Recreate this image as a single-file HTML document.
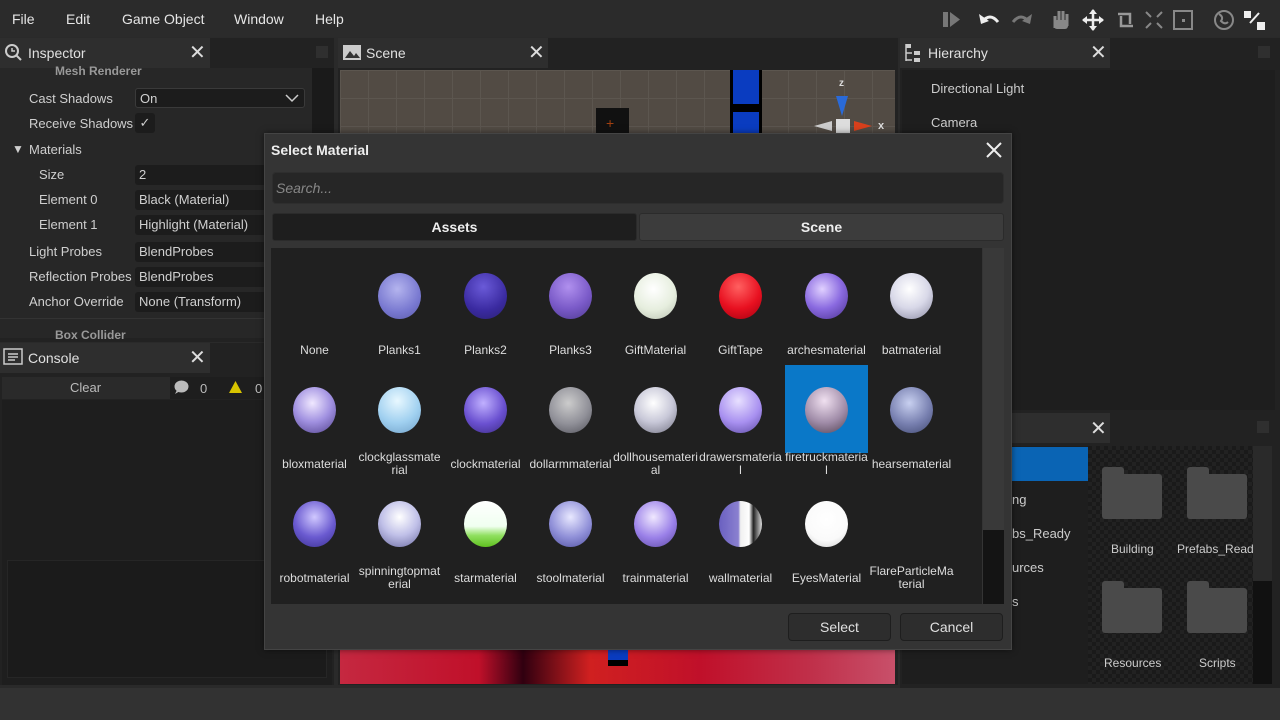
<!DOCTYPE html>
<html><head><meta charset="utf-8"><style>
*{box-sizing:border-box;margin:0;padding:0}
body{width:1280px;height:720px;background:#2a2a2a;font-family:"Liberation Sans",sans-serif;color:#cfcfcf;font-size:13px;position:relative;overflow:hidden}
.a{position:absolute}
.t{position:absolute;white-space:nowrap}
.x{position:absolute;font-size:20px;color:#ddd;line-height:1}
.field{position:absolute;background:#1c1c1c;border-radius:3px;height:20px;color:#d0d0d0;padding-left:4px;line-height:20px;font-size:13px}
.tile{position:absolute;width:85px;height:114px;text-align:center;font-size:12px;color:#ddd}
.tile .s{position:absolute;left:21px;top:9px;width:43px;height:46px;border-radius:50%}
.tile .l{position:absolute;left:0;right:0;top:74px;line-height:13px}
.sel{background:#0a78c8}
.folder{position:absolute;width:60px;height:52px}
.folder:before{content:"";position:absolute;left:0;top:0;width:22px;height:10px;background:#4a4a4a;border-radius:3px 3px 0 0}
.folder:after{content:"";position:absolute;left:0;top:7px;width:60px;height:45px;background:#4a4a4a;border-radius:3px}
</style></head><body>
<!-- menu -->
<div class="a" style="left:0;top:0;width:1280px;height:37px;background:#2b2b2b"></div>
<div class="t" style="left:12px;top:11px;font-size:14px;color:#e6e6e6">File</div>
<div class="t" style="left:66px;top:11px;font-size:14px;color:#e6e6e6">Edit</div>
<div class="t" style="left:122px;top:11px;font-size:14px;color:#e6e6e6">Game Object</div>
<div class="t" style="left:234px;top:11px;font-size:14px;color:#e6e6e6">Window</div>
<div class="t" style="left:315px;top:11px;font-size:14px;color:#e6e6e6">Help</div>
<svg class="a" style="left:940px;top:8px" width="330" height="24" viewBox="940 8 330 24">
<g fill="#777"><rect x="943" y="12" width="5" height="15"/><path d="M950 12 L960 19.5 L950 27Z"/></g>
<path d="M982 22 q8-10 16 0" stroke="#eee" stroke-width="3" fill="none"/><path d="M979 14 l2 10 l8-3z" fill="#eee"/>
<path d="M1013 22 q8-10 16 0" stroke="#777" stroke-width="3" fill="none"/><path d="M1032 14 l-2 10 l-8-3z" fill="#777"/>
<path d="M1055 28 v-12 M1059 26 v-15 M1063 26 v-15 M1067 26 v-12" stroke="#888" stroke-width="3"/><rect x="1054" y="20" width="14" height="9" rx="3" fill="#888"/>
<path d="M1093 10 v20 M1083 20 h20" stroke="#eee" stroke-width="2.5"/><path d="M1093 9 l-4 5h8z M1093 31 l-4-5h8z M1082 20 l5-4v8z M1104 20 l-5-4v8z" fill="#eee"/>
<path d="M1118 14 h12 v10 M1133 26 h-12 v-10" stroke="#999" stroke-width="2.5" fill="none"/>
<path d="M1146 12 l5 5 M1162 12 l-5 5 M1146 28 l5-5 M1162 28 l-5-5" stroke="#888" stroke-width="2"/>
<rect x="1174" y="11" width="18" height="18" stroke="#888" stroke-width="2" fill="none"/><rect x="1182" y="19" width="3" height="3" fill="#888"/>
<circle cx="1224" cy="20" r="9" fill="none" stroke="#888" stroke-width="2"/><path d="M1219 14 q5 3 2 7 q4 4 7 1" stroke="#888" stroke-width="2" fill="none"/>
<rect x="1244" y="11" width="7" height="7" fill="#eee"/><rect x="1257" y="22" width="8" height="8" fill="#eee"/><path d="M1250 23 l9-10" stroke="#eee" stroke-width="2"/>
</svg>

<!-- Inspector -->
<div class="a" style="left:0;top:38px;width:334px;height:304px;background:#222"></div>
<div class="a" style="left:0;top:38px;width:210px;height:30px;background:#2e2e2e"></div>
<div class="a" style="left:0;top:68px;width:312px;height:270px;background:#272727"></div>
<div class="a" style="left:312px;top:68px;width:22px;height:270px;background:#1a1a1a"></div>
<div class="t" style="left:55px;top:64px;color:#999;font-weight:bold;font-size:12px">Mesh Renderer</div>
<div class="t" style="left:55px;top:328px;color:#999;font-weight:bold;font-size:12px">Box Collider</div>
<div class="a" style="left:0;top:318px;width:312px;height:1px;background:#333"></div>
<svg class="a" style="left:4px;top:43px" width="20" height="20"><circle cx="8" cy="8" r="6" stroke="#ccc" stroke-width="2" fill="none"/><path d="M12 12 l5 5" stroke="#ccc" stroke-width="2"/><path d="M8 5 v3 h3" stroke="#ccc" stroke-width="1.5" fill="none"/></svg>
<div class="t" style="left:28px;top:45px;font-size:14px;color:#e0e0e0">Inspector</div>
<div class="x" style="left:189px;top:43px">✕</div>
<div class="a" style="left:316px;top:46px;width:12px;height:12px;background:#2f2f2f"></div>
<div class="t" style="left:29px;top:91px">Cast Shadows</div>
<div class="field" style="left:135px;top:88px;width:170px;border:1px solid #3a3a3a">On</div>
<svg class="a" style="left:285px;top:92px" width="14" height="12"><path d="M1 3 l6 6 l6-6" stroke="#ccc" stroke-width="1.5" fill="none"/></svg>
<div class="t" style="left:29px;top:116px">Receive Shadows</div>
<div class="a" style="left:135px;top:113px;width:20px;height:20px;background:#1c1c1c;border-radius:3px;color:#ccc;text-align:center;line-height:20px">✓</div>
<div class="t" style="left:12px;top:142px;font-size:12px">▼</div>
<div class="t" style="left:29px;top:142px">Materials</div>
<div class="t" style="left:39px;top:167px">Size</div>
<div class="t" style="left:39px;top:192px">Element 0</div>
<div class="t" style="left:39px;top:217px">Element 1</div>
<div class="t" style="left:29px;top:244px">Light Probes</div>
<div class="t" style="left:29px;top:269px">Reflection Probes</div>
<div class="t" style="left:29px;top:294px">Anchor Override</div>
<div class="field" style="left:135px;top:165px;width:140px">2</div>
<div class="field" style="left:135px;top:190px;width:140px">Black (Material)</div>
<div class="field" style="left:135px;top:215px;width:140px">Highlight (Material)</div>
<div class="field" style="left:135px;top:242px;width:140px">BlendProbes</div>
<div class="field" style="left:135px;top:267px;width:140px">BlendProbes</div>
<div class="field" style="left:135px;top:292px;width:140px">None (Transform)</div>

<!-- Console -->
<div class="a" style="left:0;top:343px;width:334px;height:342px;background:#222"></div>
<div class="a" style="left:0;top:343px;width:210px;height:30px;background:#2e2e2e"></div>
<svg class="a" style="left:3px;top:348px" width="22" height="20"><rect x="1" y="1" width="18" height="15" fill="none" stroke="#ccc" stroke-width="1.5"/><path d="M5 6h10M5 9h10M5 12h7" stroke="#ccc" stroke-width="1.5"/></svg>
<div class="t" style="left:28px;top:350px;font-size:14px;color:#e0e0e0">Console</div>
<div class="x" style="left:189px;top:348px">✕</div>
<div class="a" style="left:2px;top:377px;width:168px;height:22px;background:#2a2a2a"></div>
<div class="t" style="left:70px;top:380px;color:#bbb">Clear</div>
<div class="a" style="left:170px;top:377px;width:164px;height:22px;background:#1e1e1e"></div>
<svg class="a" style="left:174px;top:380px" width="16" height="15"><ellipse cx="7.5" cy="6.5" rx="7" ry="6" fill="#bbb"/><path d="M3 10 l-2 4 l5-3z" fill="#bbb"/></svg>
<div class="t" style="left:200px;top:381px;color:#bbb">0</div>
<svg class="a" style="left:228px;top:380px" width="15" height="14"><path d="M7.5 1 L14 13 H1Z" fill="#d8c400"/></svg>
<div class="t" style="left:255px;top:381px;color:#bbb">0</div>
<div class="a" style="left:2px;top:400px;width:330px;height:285px;background:#1e1e1e"></div>
<div class="a" style="left:7px;top:560px;width:320px;height:118px;background:#1b1b1b;border:1px solid #262626"></div>

<!-- Scene -->
<div class="a" style="left:338px;top:38px;width:560px;height:647px;background:#222"></div>
<div class="a" style="left:338px;top:38px;width:210px;height:30px;background:#2e2e2e"></div>
<svg class="a" style="left:342px;top:44px" width="20" height="18"><rect x="1" y="1" width="18" height="15" fill="#ccc"/><path d="M3 14 l5-7 4 5 2-3 4 5z" fill="#333"/></svg>
<div class="t" style="left:366px;top:45px;font-size:14px;color:#e0e0e0">Scene</div>
<div class="x" style="left:528px;top:43px">✕</div>
<div class="a" style="left:340px;top:70px;width:555px;height:580px;background:#524b44;background-image:linear-gradient(#5c564f 1px,transparent 1px),linear-gradient(90deg,#5c564f 1px,transparent 1px);background-size:28px 28px"></div>
<div class="a" style="left:596px;top:108px;width:33px;height:28px;background:#111"></div>
<div class="t" style="left:606px;top:115px;color:#a04010;font-size:14px">+</div>
<div class="a" style="left:730px;top:70px;width:32px;height:68px;background:#000"></div>
<div class="a" style="left:733px;top:70px;width:26px;height:34px;background:#0a3cc0"></div>
<div class="a" style="left:733px;top:112px;width:26px;height:26px;background:#0a3cc0"></div>
<div class="t" style="left:839px;top:78px;font-size:10px;color:#ddd;font-weight:bold">z</div>
<svg class="a" style="left:810px;top:94px" width="80" height="40"><path d="M26 2 L38 2 L32 22Z" fill="#2a6ad8"/><rect x="26" y="25" width="14" height="14" fill="#ddd"/><path d="M4 32 L22 27 L22 37Z" fill="#ccc"/><path d="M62 32 L44 27 L44 37Z" fill="#d8401c"/></svg>
<div class="t" style="left:878px;top:120px;font-size:11px;color:#ddd;font-weight:bold">x</div>
<div class="a" style="left:340px;top:650px;width:555px;height:34px;background:linear-gradient(90deg,#c52840 0%,#c0102a 25%,#300010 33%,#d02020 45%,#c0102a 65%,#c0304a 85%,#c8506a 100%)"></div>
<div class="a" style="left:608px;top:648px;width:20px;height:18px;background:#0a3cc0;border-bottom:6px solid #000"></div>

<!-- Hierarchy -->
<div class="a" style="left:900px;top:38px;width:380px;height:375px;background:#222"></div>
<div class="a" style="left:900px;top:38px;width:210px;height:30px;background:#2e2e2e"></div>
<svg class="a" style="left:904px;top:43px" width="20" height="20"><path d="M2 1v17 M2 10h6 M2 17h6" stroke="#ccc" stroke-width="1.5" fill="none"/><rect x="2" y="1" width="5" height="4" fill="#ccc"/><rect x="10" y="8" width="6" height="4" fill="#ccc"/><rect x="10" y="15" width="6" height="4" fill="#ccc"/></svg>
<div class="t" style="left:928px;top:45px;font-size:14px;color:#e0e0e0">Hierarchy</div>
<div class="x" style="left:1090px;top:43px">✕</div>
<div class="a" style="left:1258px;top:46px;width:12px;height:12px;background:#2f2f2f"></div>
<div class="a" style="left:902px;top:70px;width:373px;height:340px;background:#1e1e1e"></div>
<div class="t" style="left:931px;top:81px;color:#ccc">Directional Light</div>
<div class="t" style="left:931px;top:115px;color:#ccc">Camera</div>

<!-- Project -->
<div class="a" style="left:900px;top:413px;width:380px;height:275px;background:#222"></div>
<div class="a" style="left:900px;top:413px;width:210px;height:30px;background:#2e2e2e"></div>
<div class="x" style="left:1090px;top:419px">✕</div>
<div class="a" style="left:1257px;top:421px;width:12px;height:12px;background:#2f2f2f"></div>
<div class="a" style="left:902px;top:446px;width:186px;height:238px;background:#1e1e1e"></div>
<div class="a" style="left:1012px;top:447px;width:76px;height:34px;background:#0a64b4"></div>
<div class="t" style="left:1012px;top:492px;color:#ccc">ng</div>
<div class="t" style="left:1012px;top:526px;color:#ccc">bs_Ready</div>
<div class="t" style="left:1012px;top:560px;color:#ccc">urces</div>
<div class="t" style="left:1012px;top:594px;color:#ccc">s</div>
<div class="a" style="left:1088px;top:446px;width:165px;height:238px;background:#1c1c1c;background-image:repeating-conic-gradient(#222 0 25%,#1a1a1a 0 50%);background-size:8px 8px"></div>
<div class="a" style="left:1253px;top:446px;width:19px;height:135px;background:#2a2a2a"></div>
<div class="a" style="left:1253px;top:581px;width:19px;height:103px;background:#111"></div>
<div class="folder" style="left:1102px;top:467px"></div>
<div class="folder" style="left:1187px;top:467px"></div>
<div class="folder" style="left:1102px;top:581px"></div>
<div class="folder" style="left:1187px;top:581px"></div>
<div class="t" style="left:1111px;top:542px;font-size:12px;color:#ccc">Building</div>
<div class="t" style="left:1177px;top:542px;font-size:12px;color:#ccc">Prefabs_Read</div>
<div class="t" style="left:1104px;top:656px;font-size:12px;color:#ccc">Resources</div>
<div class="t" style="left:1199px;top:656px;font-size:12px;color:#ccc">Scripts</div>

<!-- bottom bar -->
<div class="a" style="left:0;top:688px;width:1280px;height:32px;background:#323232"></div>

<!-- Dialog -->
<div class="a" style="left:264px;top:133px;width:748px;height:517px;background:#343434;border:1px solid #444;box-shadow:0 0 6px rgba(0,0,0,.5)"></div>
<div class="t" style="left:271px;top:142px;font-size:14px;font-weight:bold;color:#eee">Select Material</div>
<svg class="a" style="left:986px;top:142px" width="16" height="16"><path d="M1 1L15 15M15 1L1 15" stroke="#eee" stroke-width="2"/></svg>
<div class="a" style="left:272px;top:172px;width:732px;height:32px;background:#262626;border:1px solid #2e2e2e;border-radius:4px"></div>
<div class="t" style="left:276px;top:180px;font-style:italic;color:#888;font-size:14px">Search...</div>
<div class="a" style="left:272px;top:213px;width:365px;height:28px;background:#1e1e1e;border:1px solid #2b2b2b;border-radius:3px;text-align:center;line-height:26px;font-weight:bold;color:#eee;font-size:14px">Assets</div>
<div class="a" style="left:639px;top:213px;width:365px;height:28px;background:#3c3c3c;border:1px solid #2b2b2b;border-radius:3px;text-align:center;line-height:26px;font-weight:bold;color:#eee;font-size:14px">Scene</div>
<div class="a" style="left:271px;top:248px;width:711px;height:356px;background:#202020"></div>
<div class="a" style="left:983px;top:248px;width:21px;height:282px;background:#393939"></div>
<div class="a" style="left:983px;top:530px;width:21px;height:74px;background:#141414"></div>

<!-- row 1 -->
<div class="tile" style="left:272px;top:250px"><div class="l" style="top:94px">None</div></div>
<div class="tile" style="left:357px;top:250px"><div class="s" style="top:23px;background:radial-gradient(circle at 45% 35%,#b4b4ee,#7878d0 60%,#5a5aa8)"></div><div class="l" style="top:94px">Planks1</div></div>
<div class="tile" style="left:443px;top:250px"><div class="s" style="top:23px;background:radial-gradient(circle at 45% 30%,#6a5ad8,#3a2aa0 60%,#2a2070)"></div><div class="l" style="top:94px">Planks2</div></div>
<div class="tile" style="left:528px;top:250px"><div class="s" style="top:23px;background:radial-gradient(circle at 45% 30%,#b090ee,#7a5ac8 55%,#4e3a90)"></div><div class="l" style="top:94px">Planks3</div></div>
<div class="tile" style="left:613px;top:250px"><div class="s" style="top:23px;background:radial-gradient(circle at 45% 35%,#fff,#e6eede 55%,#b8c0b0);"></div><div class="l" style="top:94px">GiftMaterial</div></div>
<div class="tile" style="left:698px;top:250px"><div class="s" style="top:23px;background:radial-gradient(circle at 45% 30%,#ff6060,#e81020 55%,#a00010)"></div><div class="l" style="top:94px">GiftTape</div></div>
<div class="tile" style="left:784px;top:250px"><div class="s" style="top:23px;background:radial-gradient(circle at 40% 35%,#e0d0ff,#8a6ae0 50%,#4a3090)"></div><div class="l" style="top:94px">archesmaterial</div></div>
<div class="tile" style="left:869px;top:250px"><div class="s" style="top:23px;background:radial-gradient(circle at 45% 35%,#fff,#d8d8e8 50%,#8888a0)"></div><div class="l" style="top:94px">batmaterial</div></div>
<!-- row 2 -->
<div class="tile" style="left:272px;top:364px"><div class="s" style="top:23px;background:radial-gradient(circle at 45% 35%,#f0e8ff,#a090e0 50%,#50408a)"></div><div class="l" style="top:94px">bloxmaterial</div></div>
<div class="tile" style="left:357px;top:364px"><div class="s" style="top:23px;background:radial-gradient(circle at 45% 30%,#e8f8ff,#a0d0f0 55%,#70a0c8)"></div><div class="l" style="top:87px">clockglassmate<br>rial</div></div>
<div class="tile" style="left:443px;top:364px"><div class="s" style="top:23px;background:radial-gradient(circle at 45% 35%,#c0b0ff,#6a50d0 55%,#3a2a80)"></div><div class="l" style="top:94px">clockmaterial</div></div>
<div class="tile" style="left:528px;top:364px"><div class="s" style="top:23px;background:radial-gradient(circle at 45% 35%,#ccc,#909098 55%,#505058)"></div><div class="l" style="top:94px">dollarmmaterial</div></div>
<div class="tile" style="left:613px;top:364px"><div class="s" style="top:23px;background:radial-gradient(circle at 45% 35%,#fff,#c8c8d8 50%,#707080)"></div><div class="l" style="top:87px">dollhousemateri<br>al</div></div>
<div class="tile" style="left:698px;top:364px"><div class="s" style="top:23px;background:radial-gradient(circle at 45% 30%,#e8e0ff,#a890f0 55%,#5a48a0)"></div><div class="l" style="top:87px">drawersmateria<br>l</div></div>
<div class="tile sel" style="left:785px;top:365px;width:83px;height:88px"><div class="s" style="top:22px;left:20px;background:radial-gradient(circle at 45% 30%,#f0e0f0,#a08ca8 55%,#504050)"></div><div class="l" style="top:86px">firetruckmateria<br>l</div></div>
<div class="tile" style="left:869px;top:364px"><div class="s" style="top:23px;background:radial-gradient(circle at 45% 35%,#c8d0f0,#7880b0 55%,#404870)"></div><div class="l" style="top:94px">hearsematerial</div></div>
<!-- row 3 -->
<div class="tile" style="left:272px;top:478px"><div class="s" style="top:23px;background:radial-gradient(circle at 50% 35%,#d0c8ff,#6a5ad0 55%,#3a3090)"></div><div class="l" style="top:94px">robotmaterial</div></div>
<div class="tile" style="left:357px;top:478px"><div class="s" style="top:23px;background:radial-gradient(circle at 50% 35%,#fff,#c0c0e8 50%,#6a6aa0)"></div><div class="l" style="top:87px">spinningtopmat<br>erial</div></div>
<div class="tile" style="left:443px;top:478px"><div class="s" style="top:23px;background:linear-gradient(#fff 0%,#f0fff0 55%,#90e060 75%,#60c020 100%)"></div><div class="l" style="top:94px">starmaterial</div></div>
<div class="tile" style="left:528px;top:478px"><div class="s" style="top:23px;background:radial-gradient(circle at 50% 35%,#e8e8ff,#9090d8 55%,#5050a0)"></div><div class="l" style="top:94px">stoolmaterial</div></div>
<div class="tile" style="left:613px;top:478px"><div class="s" style="top:23px;background:radial-gradient(circle at 45% 35%,#f0e8ff,#9a80e8 55%,#5a48a0)"></div><div class="l" style="top:94px">trainmaterial</div></div>
<div class="tile" style="left:698px;top:478px"><div class="s" style="top:23px;background:linear-gradient(90deg,#6a60c0 0%,#8a80d0 45%,#f0f0f0 50%,#fff 70%,#222 80%,#ddd 100%)"></div><div class="l" style="top:94px">wallmaterial</div></div>
<div class="tile" style="left:784px;top:478px"><div class="s" style="top:23px;background:radial-gradient(circle at 50% 40%,#fff,#fafafa 60%,#ccc)"></div><div class="l" style="top:94px">EyesMaterial</div></div>
<div class="tile" style="left:869px;top:478px"><div class="l" style="top:87px">FlareParticleMa<br>terial</div></div>

<div class="a" style="left:788px;top:613px;width:103px;height:28px;background:#2d2d2d;border:1px solid #1e1e1e;border-radius:4px;text-align:center;line-height:26px;font-size:14px;color:#e0e0e0">Select</div>
<div class="a" style="left:900px;top:613px;width:103px;height:28px;background:#2d2d2d;border:1px solid #1e1e1e;border-radius:4px;text-align:center;line-height:26px;font-size:14px;color:#e0e0e0">Cancel</div>
</body></html>
